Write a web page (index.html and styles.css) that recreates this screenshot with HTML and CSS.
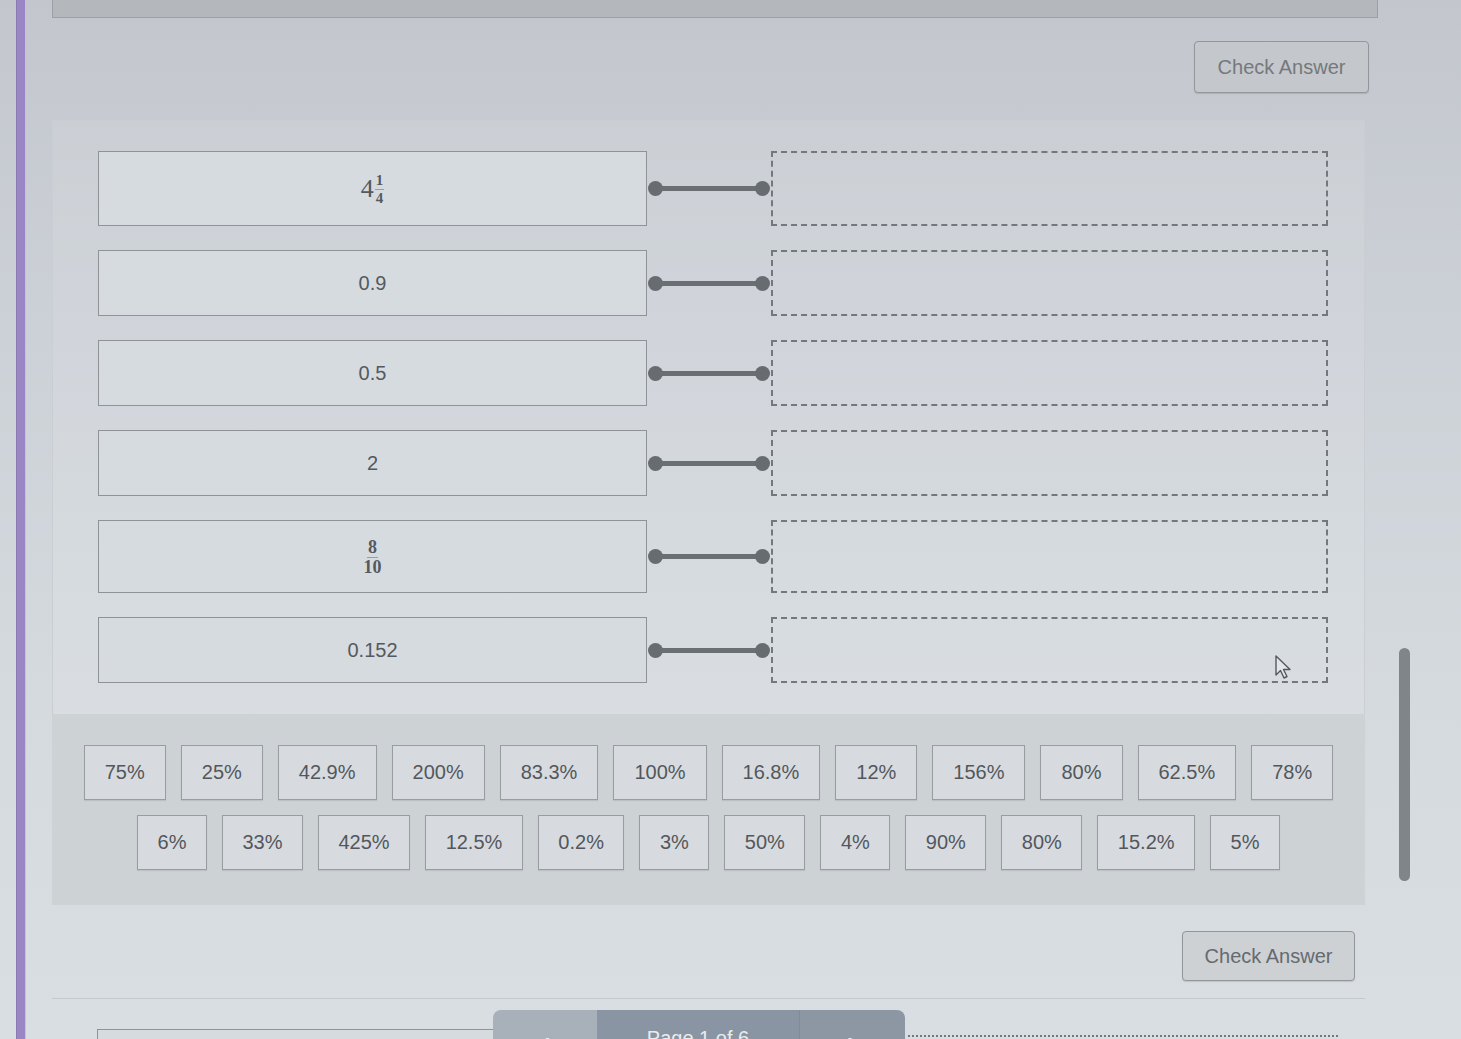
FILE: index.html
```html
<!doctype html>
<html>
<head>
	<meta charset="utf-8"/>
	<title>Percent matching</title>
	<link rel="stylesheet" href="styles.css">
</head>
<body>
	<div class="page">
		<div class="stripe"></div>
		<div class="main">
			<div class="topbar"></div>

			<div class="actions top">
				<button class="check">Check Answer</button>
			</div>

			<div class="match">
				<div class="prompt"><span class="mixed"><span class="whole">4</span><span class="frac"><span class="num">1</span><span>4</span></span></span></div>
				<div class="link"><span class="dot"></span><span class="bar"></span><span class="dot"></span></div>
				<div class="slot"></div>

				<div class="prompt short">0.9</div>
				<div class="link"><span class="dot"></span><span class="bar"></span><span class="dot"></span></div>
				<div class="slot short"></div>

				<div class="prompt short">0.5</div>
				<div class="link"><span class="dot"></span><span class="bar"></span><span class="dot"></span></div>
				<div class="slot short"></div>

				<div class="prompt short">2</div>
				<div class="link"><span class="dot"></span><span class="bar"></span><span class="dot"></span></div>
				<div class="slot short"></div>

				<div class="prompt tall"><span class="frac big"><span class="num">8</span><span>10</span></span></div>
				<div class="link"><span class="dot"></span><span class="bar"></span><span class="dot"></span></div>
				<div class="slot tall"></div>

				<div class="prompt short">0.152</div>
				<div class="link"><span class="dot"></span><span class="bar"></span><span class="dot"></span></div>
				<div class="slot short last">
					<svg class="cursor" width="18" height="26" viewBox="0 0 18 26">
						<path d="M1 1 L1 20 L5.5 15.5 L9 23 L12 21.5 L8.5 14.5 L15 14.5 Z" fill="#e4e7ea" stroke="#55595e" stroke-width="1.4" stroke-linejoin="round"/>
					</svg>
				</div>
			</div>

			<div class="bank">
				<div class="bank-row">
					<div class="tile">75%</div>
					<div class="tile">25%</div>
					<div class="tile">42.9%</div>
					<div class="tile">200%</div>
					<div class="tile">83.3%</div>
					<div class="tile">100%</div>
					<div class="tile">16.8%</div>
					<div class="tile">12%</div>
					<div class="tile">156%</div>
					<div class="tile">80%</div>
					<div class="tile">62.5%</div>
					<div class="tile">78%</div>
				</div>
				<div class="bank-row second">
					<div class="tile">6%</div>
					<div class="tile">33%</div>
					<div class="tile">425%</div>
					<div class="tile">12.5%</div>
					<div class="tile">0.2%</div>
					<div class="tile">3%</div>
					<div class="tile">50%</div>
					<div class="tile">4%</div>
					<div class="tile">90%</div>
					<div class="tile">80%</div>
					<div class="tile">15.2%</div>
					<div class="tile">5%</div>
				</div>
			</div>

			<div class="actions bottom">
				<button class="check small">Check Answer</button>
			</div>

			<div class="separator"></div>

			<div class="next">
				<div class="prompt short"></div>
				<div class="gapcell"></div>
				<div class="slot short"></div>
			</div>

			<div class="pager">
				<div class="pager-prev">&lsaquo;</div>
				<div class="pager-label">Page 1 of 6</div>
				<div class="pager-next">&rsaquo;</div>
			</div>
		</div>
		<div class="scrollbar"></div>
	</div>
</body>
</html>
```

FILE: styles.css
```css
		html, body {
			margin: 0;
			height: 100%;
		}
		body {
			background: linear-gradient(to bottom, #c3c6cd 0px, #cbd0d6 300px, #d5dadf 700px, #d9dee2 1039px);
			font-family: "Liberation Sans", Arial, sans-serif;
			color: #54585d;
			overflow: hidden;
		}
		.page {
			display: flex;
			height: 1039px;
			position: relative;
		}
		.stripe {
			width: 8px;
			margin-left: 17px;
			background: #9a86c4;
			box-shadow: 1px 0 0 #c9bfe0, -1px 0 0 #8a7bb0;
		}
		.main {
			margin-left: 27px;
			width: 1326px;
			position: relative;
		}
		.topbar {
			height: 17px;
			background: #b4b7bc;
			border: 1px solid #9c9fa5;
			border-top: none;
		}

		.actions {
			display: flex;
			justify-content: flex-end;
		}
		.actions.top {
			padding-top: 23px;
			padding-right: 9px;
		}
		.actions.bottom {
			width: 1313px;
			padding-top: 26px;
			padding-right: 10px;
			box-sizing: border-box;
		}
		.check {
			width: 175px;
			height: 52px;
			background: #c4c7cb;
			border: 1px solid #93979c;
			border-radius: 4px;
			color: #75797d;
			font-family: "Liberation Sans", Arial, sans-serif;
			font-size: 20px;
			box-shadow: 0 1px 1px rgba(0,0,0,0.12);
		}
		.check.small {
			width: 173px;
			height: 50px;
			background: #cdd1d4;
			color: #666a6f;
		}

		/* matching area */
		.match {
			margin-top: 27px;
			width: 1313px;
			box-sizing: border-box;
			padding: 30px 38px 31px 45px;
			display: grid;
			grid-template-columns: 549px 124px 557px;
			row-gap: 24px;
			background: rgba(255, 255, 255, 0.1);
			border: 1px solid #c9ced4;
			border-bottom: none;
		}
		.prompt {
			height: 75px;
			box-sizing: border-box;
			border: 1.5px solid #8f9398;
			background: #d6dbe0;
			display: flex;
			align-items: center;
			justify-content: center;
			font-size: 20px;
			color: #55595e;
		}
		.prompt.short { height: 66px; }
		.prompt.tall { height: 73px; }
		.slot {
			height: 75px;
			box-sizing: border-box;
			border: 2px dashed #74787d;
			position: relative;
		}
		.slot.short { height: 66px; }
		.slot.tall { height: 73px; }
		.link {
			display: flex;
			align-items: center;
			padding: 0 1px;
		}
		.dot {
			width: 15px;
			height: 15px;
			border-radius: 50%;
			background: #676c71;
			flex: none;
		}
		.bar {
			flex: 1;
			height: 5px;
			margin: 0 -3px;
			background: #6a6f74;
		}
		.cursor {
			position: absolute;
			right: 33px;
			bottom: 0px;
		}

		/* fractions */
		.mixed {
			display: inline-flex;
			align-items: center;
			font-family: "Liberation Serif", "Times New Roman", serif;
		}
		.whole {
			font-size: 26px;
			margin-right: 1px;
		}
		.frac {
			display: inline-flex;
			flex-direction: column;
			align-items: center;
			font-family: "Liberation Serif", "Times New Roman", serif;
			font-size: 15px;
			line-height: 16px;
			font-weight: bold;
		}
		.frac .num {
			border-bottom: 1px solid #999da2;
			padding: 0 1px 1px;
		}
		.frac.big {
			font-size: 18px;
			line-height: 18px;
		}

		/* answer bank */
		.bank {
			width: 1313px;
			box-sizing: border-box;
			padding: 31px 0 35px;
			background: #cdd3d5;
			display: flex;
			flex-direction: column;
			gap: 15px;
		}
		.bank-row {
			display: flex;
			justify-content: center;
			gap: 15px;
		}
		.tile {
			height: 55px;
			line-height: 53px;
			box-sizing: border-box;
			padding: 0 20px;
			border: 1px solid #999da2;
			background: #d7dbdf;
			font-size: 20px;
			color: #53575c;
			box-shadow: 0 1px 1px rgba(0,0,0,0.08);
		}
		.bank-row.second .tile {
			padding: 0 19.5px;
		}

		.separator {
			margin-top: 17px;
			width: 1313px;
			height: 1px;
			background: #c3c8cd;
		}
		.next {
			margin-top: 30px;
			padding-left: 45px;
			display: grid;
			grid-template-columns: 549px 262px 430px;
		}
		.gapcell { height: 66px; }
		.next .slot {
			margin-top: 6px;
			border-style: dotted;
		}

		.pager {
			position: absolute;
			left: 441px;
			top: 1010px;
			width: 412px;
			height: 50px;
			display: flex;
			border-radius: 8px 8px 0 0;
			overflow: hidden;
			color: #e8ecef;
			font-size: 20px;
		}
		.pager-prev {
			width: 104px;
			background: #a8b0b9;
			text-align: center;
			font-size: 34px;
			line-height: 62px;
		}
		.pager-label {
			flex: 1;
			background: #8995a2;
			text-align: center;
			line-height: 56px;
		}
		.pager-next {
			width: 105px;
			background: #8c97a3;
			text-align: center;
			font-size: 34px;
			line-height: 62px;
			border-left: 1px solid #808b97;
		}

		.scrollbar {
			position: absolute;
			left: 1399px;
			top: 648px;
			width: 11px;
			height: 233px;
			border-radius: 6px;
			background: #7f8589;
		}
```
